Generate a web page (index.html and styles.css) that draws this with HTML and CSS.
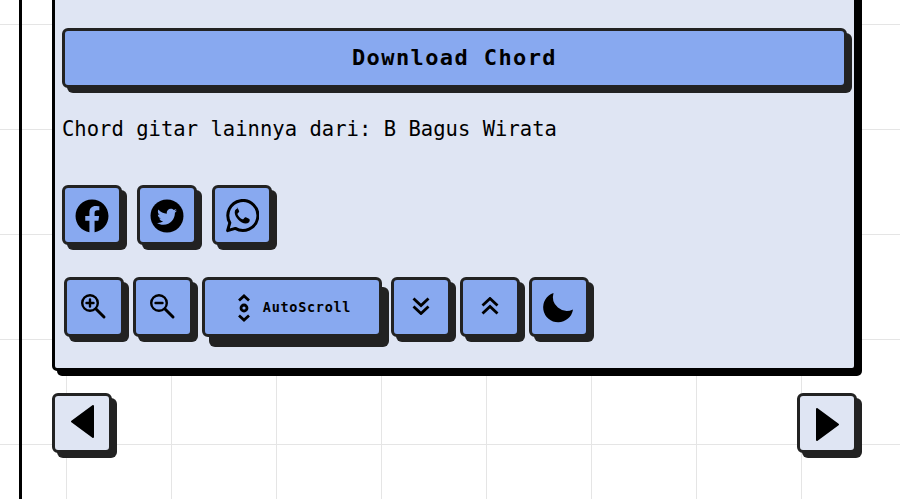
FILE: index.html
```html
<!DOCTYPE html>
<html lang="id">
<head>
<meta charset="utf-8">
<title>Chord</title>
<link rel="stylesheet" href="styles.css">
</head>
<body>
<div class="page">
  <main class="card">
    <button class="btn download">Download Chord</button>
    <p class="more">Chord gitar lainnya dari: B Bagus Wirata</p>
    <div class="row social">
      <a class="btn square"><svg class="ic32" viewBox="0 0 512 512"><path d="M504 256C504 119 393 8 256 8S8 119 8 256c0 123.78 90.69 226.38 209.25 245V327.69h-63V256h63v-54.64c0-62.15 37-96.48 93.67-96.48 27.14 0 55.52 4.84 55.52 4.84v61h-31.28c-30.8 0-40.41 19.12-40.41 38.73V256h68.78l-11 71.69h-57.78V501C413.31 482.38 504 379.78 504 256z"/></svg></a>
      <a class="btn square"><svg class="ic32" viewBox="0 0 512 512"><circle cx="256" cy="256" r="248"/><path class="bird" transform="translate(106 118) scale(.585)" d="M459.37 151.716c.325 4.548.325 9.097.325 13.645 0 138.72-105.583 298.558-298.558 298.558-59.452 0-114.68-17.219-161.137-47.106 8.447.974 16.568 1.299 25.34 1.299 49.055 0 94.213-16.568 130.274-44.832-46.132-.975-84.792-31.188-98.112-72.772 6.498.974 12.995 1.624 19.818 1.624 9.421 0 18.843-1.3 27.614-3.573-48.081-9.747-84.143-51.98-84.143-102.985v-1.299c13.969 7.797 30.214 12.67 47.431 13.319-28.264-18.843-46.781-51.005-46.781-87.391 0-19.492 5.197-37.36 14.294-52.954 51.655 63.675 129.3 105.258 216.365 109.807-1.624-7.797-2.599-15.918-2.599-24.04 0-57.828 46.782-104.934 104.934-104.934 30.213 0 57.502 12.67 76.67 33.137 23.715-4.548 46.456-13.32 66.599-25.34-7.798 24.366-24.366 44.833-46.132 57.827 21.117-2.273 41.584-8.122 60.426-16.243-14.292 20.791-32.161 39.308-52.628 54.253z"/></svg></a>
      <a class="btn square"><svg class="ic32" viewBox="0 0 34 34"><path class="ring" d="M2.600 31.600 4.800 23.800A15 15 0 1 1 10.300 29.400Z"/><path d="M12.600 9.600c-.9 0-2.900 1.200-2.900 3.800 0 4.600 6 11 11 11 2.700 0 4-1.900 4-3 0-.9-.3-1.300-.8-1.600l-3-1.500c-.7-.3-1.100 0-1.400.4l-1 1.300c-.3.4-.7.4-1.100.2-2.300-1.100-3.700-2.500-4.800-4.800-.2-.4-.1-.8.200-1.100l1-1c.4-.4.500-.8.300-1.300l-1.300-2.800c-.2-.4-.5-.6-1.200-.6z"/></svg></a>
    </div>
    <div class="row tools">
      <button class="btn square"><svg class="ic24" viewBox="0 0 24 24"><circle class="line" cx="9" cy="9" r="7.800"/><path class="line" d="M5.500 9h7M9 5.500v7"/><path class="line handle" d="M15 15l8 8"/></svg></button>
      <button class="btn square"><svg class="ic24" viewBox="0 0 24 24"><circle class="line" cx="9" cy="9" r="7.800"/><path class="line" d="M5.500 9h7"/><path class="line handle" d="M15 15l8 8"/></svg></button>
      <button class="btn auto"><svg class="scroll" viewBox="0 0 14 28"><path class="line thick" d="M2 6.500 7 2l5 4.500M2 21.500 7 26l5-4.500"/><circle class="line thick" cx="7" cy="14" r="3"/></svg><span>AutoScroll</span></button>
      <button class="btn square"><svg class="ic18" viewBox="0 0 18 18"><path class="line thick" d="M1.500 1.500 9 8.500l7.500-7M1.500 9.500 9 16.500l7.500-7"/></svg></button>
      <button class="btn square"><svg class="ic18" viewBox="0 0 18 18"><path class="line thick" d="M1.500 8.500 9 1.500l7.500 7M1.500 16.500 9 9.500l7.500 7"/></svg></button>
      <button class="btn square"><svg class="moon" viewBox="0 0 30 28"><path d="M10.500 0A15 15 0 1 0 30 16.500 14 14 0 0 1 10.500 0Z"/></svg></button>
    </div>
  </main>
  <nav class="pager">
    <a class="btn square light"><svg class="arrow arrow-prev" viewBox="0 0 23 33"><path class="tri" d="M22 1v31L1 16.500Z"/></svg></a>
    <a class="btn square light"><svg class="arrow arrow-next" viewBox="0 0 23 33"><path class="tri" d="M1 1v31l21-15.500Z"/></svg></a>
  </nav>
</div>
</body>
</html>
```
FILE: styles.css
```css
* { box-sizing: border-box; }
html, body { height: 499px; overflow: hidden; }
body {
  margin: 0;
  background-color: #fff;
  background-image:
    linear-gradient(to right, #e5e5e5 1px, transparent 1px),
    linear-gradient(to bottom, #e5e5e5 1px, transparent 1px);
  background-size: 105px 105px;
  background-position: 66px 24px;
  font-family: "DejaVu Sans Mono", monospace;
  color: #000;
}
.page {
  display: flow-root;
  margin-left: 19px;
  height: 499px;
  border-left: 3px solid #000;
  padding: 0 43px 0 30px;
}
.card {
  margin-top: -10px;
  height: 381px;
  padding: 35px 7px 0;
  background: #dfe5f3;
  border: 3px solid #000;
  border-radius: 5px;
  box-shadow: 5px 5px 0 #000;
}
.btn {
  display: flex;
  align-items: center;
  justify-content: center;
  padding: 0;
  background: #88a9f0;
  color: #000;
  border: 3px solid #222;
  border-radius: 6px;
  box-shadow: 5px 5px 0 #222;
  font-family: inherit;
}
.download {
  width: 785px;
  height: 60px;
  padding-bottom: 2px;
  font-size: 22px;
  font-weight: 700;
  letter-spacing: 1.4px;
}
.more {
  margin: 27px 0 0;
  font-size: 20.5px;
  letter-spacing: .03px;
  line-height: 28px;
}
.row { display: flex; }
.social { gap: 15px; margin-top: 42px; }
.tools { gap: 9px; margin-top: 32px; padding-left: 2px; }
.square { width: 60px; height: 60px; flex: none; }
.auto {
  width: 180px;
  height: 60px;
  gap: 12px;
  padding-left: 4px;
  font-size: 13.5px;
  font-weight: 700;
  letter-spacing: .7px;
  box-shadow: 7px 10px 0 #222;
}
.ic32 { width: 34px; height: 34px; margin-top: 2px; }
.ic24 { width: 24px; height: 24px; margin: -2px 2px 0 0; overflow: visible; }
.ic18 { width: 18px; height: 18px; margin: -3px 1px 0 0; }
.scroll { width: 14px; height: 28px; margin-top: 1px; }
.moon { width: 30px; height: 28px; margin: 0 2px 0 0; overflow: visible; }
.arrow { width: 23px; height: 33px; }
.arrow-prev { margin-top: -3px; }
.arrow-next { margin-top: 3px; }
.ring { fill: none; stroke: #000; stroke-width: 3; stroke-linejoin: round; }
.bird { fill: #88a9f0; }
.line { fill: none; stroke: #000; stroke-width: 2.4; stroke-linecap: round; }
.handle { stroke-width: 3; }
.thick { stroke-width: 2.8; stroke-linecap: butt; }
.tri { stroke: #000; stroke-width: 2; stroke-linejoin: round; }
.pager {
  display: flex;
  justify-content: space-between;
  margin-top: 22px;
}
.light { background: #dfe5f3; }
```
